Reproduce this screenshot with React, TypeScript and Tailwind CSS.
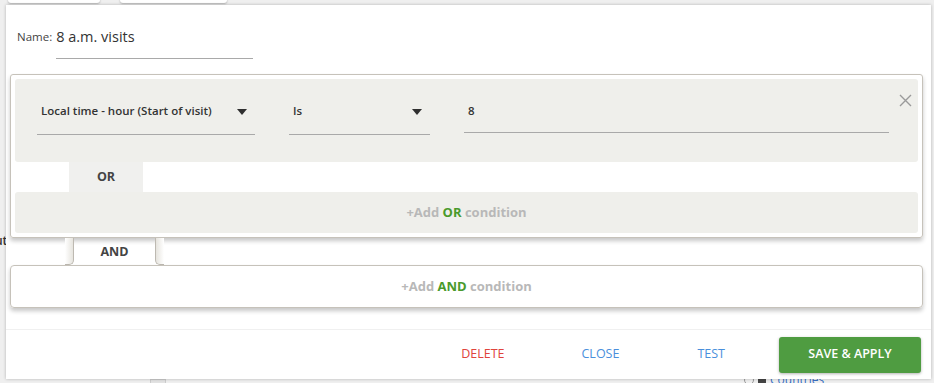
import React from "react";

const font = { fontFamily: '"Open Sans", "Noto Sans", sans-serif' };

const Caret = () => (
  <svg width="10" height="6" viewBox="0 0 10 6" className="shrink-0">
    <path d="M0 0 L10 0 L5 6 Z" fill="#2f2f2f" />
  </svg>
);

const CloseX = () => (
  <svg width="13" height="13" viewBox="0 0 13 13">
    <path d="M1 1 L12 12 M12 1 L1 12" stroke="#9a9a9a" strokeWidth="1.4" />
  </svg>
);

const SelectField = ({ label, width }: { label: string; width: string }) => (
  <div
    className={`${width} h-[36px] border-b border-[#a9a9a9] flex items-start justify-between pt-[3px] pl-[4px] pr-[8px]`}
  >
    <span className="text-[11.5px] leading-[18px] font-semibold text-[#333]">{label}</span>
    <div className="pt-[7px]">
      <Caret />
    </div>
  </div>
);

export default function App() {
  return (
    <div
      className="relative w-[934px] h-[383px] overflow-hidden bg-[#efefef]"
      style={font}
    >
      {/* page behind the dialog */}
      <div className="absolute left-[8px] top-[-10px] w-[92px] h-[13px] bg-white rounded-[3px] shadow-[0_1px_2px_rgba(0,0,0,0.25)]" />
      <div className="absolute left-[120px] top-[-10px] w-[107px] h-[13px] bg-white rounded-[3px] shadow-[0_1px_2px_rgba(0,0,0,0.25)]" />
      <div className="absolute left-[-5px] top-[232px] text-[12px] font-semibold text-[#333]">ut</div>
      <div className="absolute left-[150px] top-[379px] w-[16px] h-[8px] bg-[#e2e2e2] border border-[#ccc]" />
      <div className="absolute left-[744px] top-[371px] flex items-center gap-[4px] text-[12px] text-[#3a6fc4]">
        <span className="w-[10px] h-[10px] rounded-full border border-[#999]" />
        <span className="w-[8px] h-[10px] bg-[#444] rounded-[2px]" />
        <span>Countries</span>
      </div>

      {/* dialog */}
      <div className="relative ml-[6px] mt-[5px] w-[925px] h-[374px] bg-white shadow-[0_0_3px_rgba(0,0,0,0.25)] flex flex-col">
        <div className="flex items-start pl-[11px] pt-[23px]">
          <span className="text-[11.5px] leading-[18px] text-[#444]">Name:</span>
          <div className="ml-[4px] w-[197px] h-[31px] border-b border-[#a9a9a9] text-[14.5px] leading-[18px] text-[#333]">
            8 a.m. visits
          </div>
        </div>

        {/* OR group */}
        <div className="ml-[4px] mt-[15px] w-[913px] border border-[#c6c2ba] rounded-[3px] p-[4px] shadow-[0_3px_4px_rgba(0,0,0,0.22)]">
          <div className="h-[83px] bg-[#efefeb] rounded-[3px] flex items-start pl-[22px] pt-[20px]">
            <SelectField label="Local time - hour (Start of visit)" width="w-[218px]" />
            <div className="ml-[34px]">
              <SelectField label="Is" width="w-[141px]" />
            </div>
            <div className="ml-[34px] w-[425px] h-[34px] border-b border-[#a9a9a9] pt-[3px] pl-[4px] text-[11.5px] leading-[18px] font-semibold text-[#333]">
              8
            </div>
            <div className="ml-[10px] -mt-[5px]">
              <CloseX />
            </div>
          </div>
          <div className="h-[30px] flex">
            <div className="ml-[54px] w-[74px] bg-[#f0f0ee] flex items-center justify-center text-[12.5px] font-bold text-[#444]">
              OR
            </div>
          </div>
          <div className="h-[41px] bg-[#efefeb] rounded-[3px] flex items-center justify-center text-[13px] font-bold text-[#b8b8b8]">
            +Add&nbsp;<span className="text-[#4a9a2c]">OR</span>&nbsp;condition
          </div>
        </div>

        {/* AND connector */}
        <div className="h-[27px] flex">
          <div className="ml-[4px] w-[64px] flex justify-end">
            <div className="w-[9px] border-r border-b border-[#bdb9b1] rounded-br-[5px] bg-gradient-to-r from-white to-[#e6e4de]" />
          </div>
          <div className="w-[81px] flex items-center justify-center pt-[1px] text-[12.5px] font-bold text-[#444]">
            AND
          </div>
          <div className="w-[9px] border-l border-b border-[#bdb9b1] rounded-bl-[5px] bg-gradient-to-l from-white to-[#e6e4de]" />
        </div>
        <div className="ml-[4px] w-[913px] h-[43px] border border-[#c6c2ba] rounded-[4px] shadow-[0_3px_4px_rgba(0,0,0,0.22)] flex items-center justify-center text-[13px] font-bold text-[#b8b8b8]">
          +Add&nbsp;<span className="text-[#4a9a2c]">AND</span>&nbsp;condition
        </div>

        {/* footer */}
        <div className="mt-[21px] border-t border-[#f0f0f0] h-[50px] flex items-center justify-end pr-[10px] text-[12.5px]">
          <span className="text-[#e0443c]">DELETE</span>
          <span className="ml-[77px] text-[#4a8fdc]">CLOSE</span>
          <span className="ml-[78px] text-[#4a8fdc]">TEST</span>
          <button className="ml-[54px] w-[142px] h-[36px] rounded-[3px] bg-[#4f9c41] text-white text-[12.5px] font-semibold shadow-[0_1px_3px_rgba(0,0,0,0.3)]">
            SAVE &amp; APPLY
          </button>
        </div>
      </div>
    </div>
  );
}
